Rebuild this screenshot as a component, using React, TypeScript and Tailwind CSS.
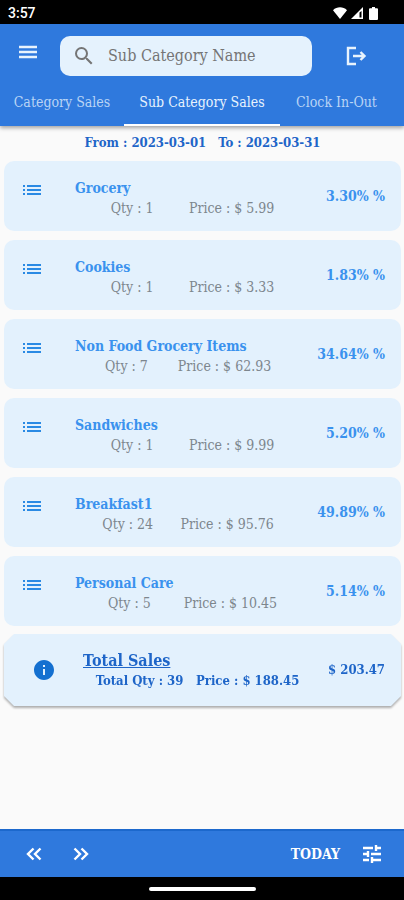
import { MdInfo, MdList, MdSearch } from "react-icons/md";

const rows = [
  { name: "Grocery", qty: 1, price: "5.99", share: "3.30%" },
  { name: "Cookies", qty: 1, price: "3.33", share: "1.83%" },
  { name: "Non Food Grocery Items", qty: 7, price: "62.93", share: "34.64%" },
  { name: "Sandwiches", qty: 1, price: "9.99", share: "5.20%" },
  { name: "Breakfast1", qty: 24, price: "95.76", share: "49.89%" },
  { name: "Personal Care", qty: 5, price: "10.45", share: "5.14%" },
];

// Bar icons, heavier than the stock Material weight
const icons = {
  menu: "M3 7h18M3 12h18M3 17h18",
  logout: "M12 4H4v16h8M9 12h11M16.500 8l4 4-4 4",
  prev: "M11.500 6.500L6 12l5.500 5.500M18.500 6.500L13 12l5.500 5.500",
  next: "M5.500 6.500L11 12l-5.500 5.500M12.500 6.500L18 12l-5.500 5.500",
  tune: "M3 6h10M17 6h4M16 3v6M3 12h5M8 9v6M11 12h10M3 18h6M12 15v6M12 18h9",
};

function BarIcon({ name }: { name: keyof typeof icons }) {
  return (
    <svg width="24" height="24" viewBox="0 0 24 24" fill="none" stroke="currentColor" strokeWidth="2.4">
      <path d={icons[name]} />
    </svg>
  );
}

function StatusBar() {
  return (
    <div className="flex h-6 items-center justify-between bg-black pt-0.5 pl-2 pr-[26px] text-white">
      <span className="font-['Roboto',sans-serif] text-sm font-medium">3:57</span>
      <div className="flex items-center gap-1">
        <svg width="14" height="12" viewBox="0 0 14 12" fill="#fff"><path d="M7 12L0 3.2C4 -.6 10 -.6 14 3.2z" /></svg>
        <svg width="12" height="12" viewBox="0 0 12 12"><path d="M12 0v12H0z" fill="#fff" /><path d="M8.500 5.500V10.500h2V4z" fill="#000" /></svg>
        <svg className="ml-0.5" width="9" height="13" viewBox="0 0 9 13" fill="#fff"><path d="M3 0h3v1.300h2a1 1 0 011 1V12a1 1 0 01-1 1H1a1 1 0 01-1-1V2.300a1 1 0 011-1h2z" /></svg>
      </div>
    </div>
  );
}

function Header() {
  return (
    <header className="relative bg-[#2f79dd] text-[#e8f3fd] shadow-[0_2px_4px_rgba(0,0,0,0.35)]">
      <div className="flex items-center pl-4 pr-9 pt-3">
        <button aria-label="Menu" className="mb-2">
          <BarIcon name="menu" />
        </button>
        <label className="ml-5 flex h-10 flex-1 items-center gap-3 rounded-[10px] bg-[#e5f2fd] px-3 text-[#757575]">
          <MdSearch size={24} className="shrink-0" />
          <input
            aria-label="Search sub category"
            placeholder="Sub Category Name"
            className="w-full min-w-0 bg-transparent text-base outline-none placeholder:text-[#757575]"
          />
        </label>
        <button aria-label="Log out" className="ml-8">
          <BarIcon name="logout" />
        </button>
      </div>
      <nav className="grid grid-cols-[124fr_156fr_113fr_11fr] text-center text-sm leading-[44px] whitespace-nowrap">
        <a href="#category" className="pt-1 text-[#b9d4f5]">Category Sales</a>
        <a href="#sub-category" className="border-b-2 border-white pt-1">Sub Category Sales</a>
        <a href="#clock" className="pt-1 text-[#b9d4f5]">Clock In-Out</a>
      </nav>
    </header>
  );
}

export default function App() {
  return (
    <div className="flex min-h-screen flex-col bg-[#fafafa] font-['DejaVu_Serif_Condensed','DejaVu_Serif',serif]">
      <StatusBar />
      <Header />

      <main className="flex-1 pl-1 pr-[3px]">
        <div className="flex h-[35px] items-center justify-center gap-3 pb-0.5 text-[13px] font-bold text-[#1e65c8]">
          <span>From : 2023-03-01</span>
          <span>To : 2023-03-31</span>
        </div>

        <ul className="flex flex-col gap-[9px]">
          {rows.map((row) => (
            <li key={row.name} className="flex h-[70px] items-center rounded-[10px] bg-[#e3f1fd] pl-4 pr-4">
              <MdList size={24} className="mb-3 shrink-0 text-[#2a8ae4]" />
              <div className="ml-[31px] flex-1 pt-1">
                <h2 className="text-sm leading-5 font-bold text-[#3a92ee]">{row.name}</h2>
                <div className="flex justify-evenly text-sm leading-5 text-[#7d868d]">
                  <span>Qty : {row.qty}</span>
                  <span>Price : $ {row.price}</span>
                </div>
              </div>
              <span className="ml-4 text-sm font-bold text-[#3a92ee]">{row.share} %</span>
            </li>
          ))}
        </ul>

        {/* Totals */}
        <div className="mt-2 drop-shadow-[0_2px_1px_rgba(0,0,0,0.3)]">
          <section className="flex h-[72px] items-center bg-[#e3f1fd] pl-7 pr-4 text-[#1e65c8] [clip-path:polygon(10px_0,calc(100%-10px)_0,100%_10px,100%_calc(100%-10px),calc(100%-10px)_100%,10px_100%,0_calc(100%-10px),0_10px)]">
            <MdInfo size={24} className="text-[#1470d0]" />
            <div className="ml-[27px] flex-1 pt-0.5 font-bold">
              <h2 className="text-base leading-5 underline">Total Sales</h2>
              <div className="flex justify-evenly text-[13px] leading-5">
                <span>Total Qty : 39</span>
                <span>Price : $ 188.45</span>
              </div>
            </div>
            <span className="ml-4 text-[13px] font-bold">$ 203.47</span>
          </section>
        </div>
      </main>

      <footer>
        <div className="flex h-12 items-center border-t-2 border-[#1c68cc] bg-[#2f79dd] pl-[22px] pr-5 text-white">
          <button aria-label="Previous">
            <BarIcon name="prev" />
          </button>
          <button aria-label="Next" className="ml-[23px]">
            <BarIcon name="next" />
          </button>
          <button className="ml-auto text-sm font-bold">TODAY</button>
          <button aria-label="Filters" className="ml-5">
            <BarIcon name="tune" />
          </button>
        </div>
        <div className="flex h-[23px] items-center justify-center bg-black">
          <div className="h-1 w-[107px] rounded-full bg-white" />
        </div>
      </footer>
    </div>
  );
}
